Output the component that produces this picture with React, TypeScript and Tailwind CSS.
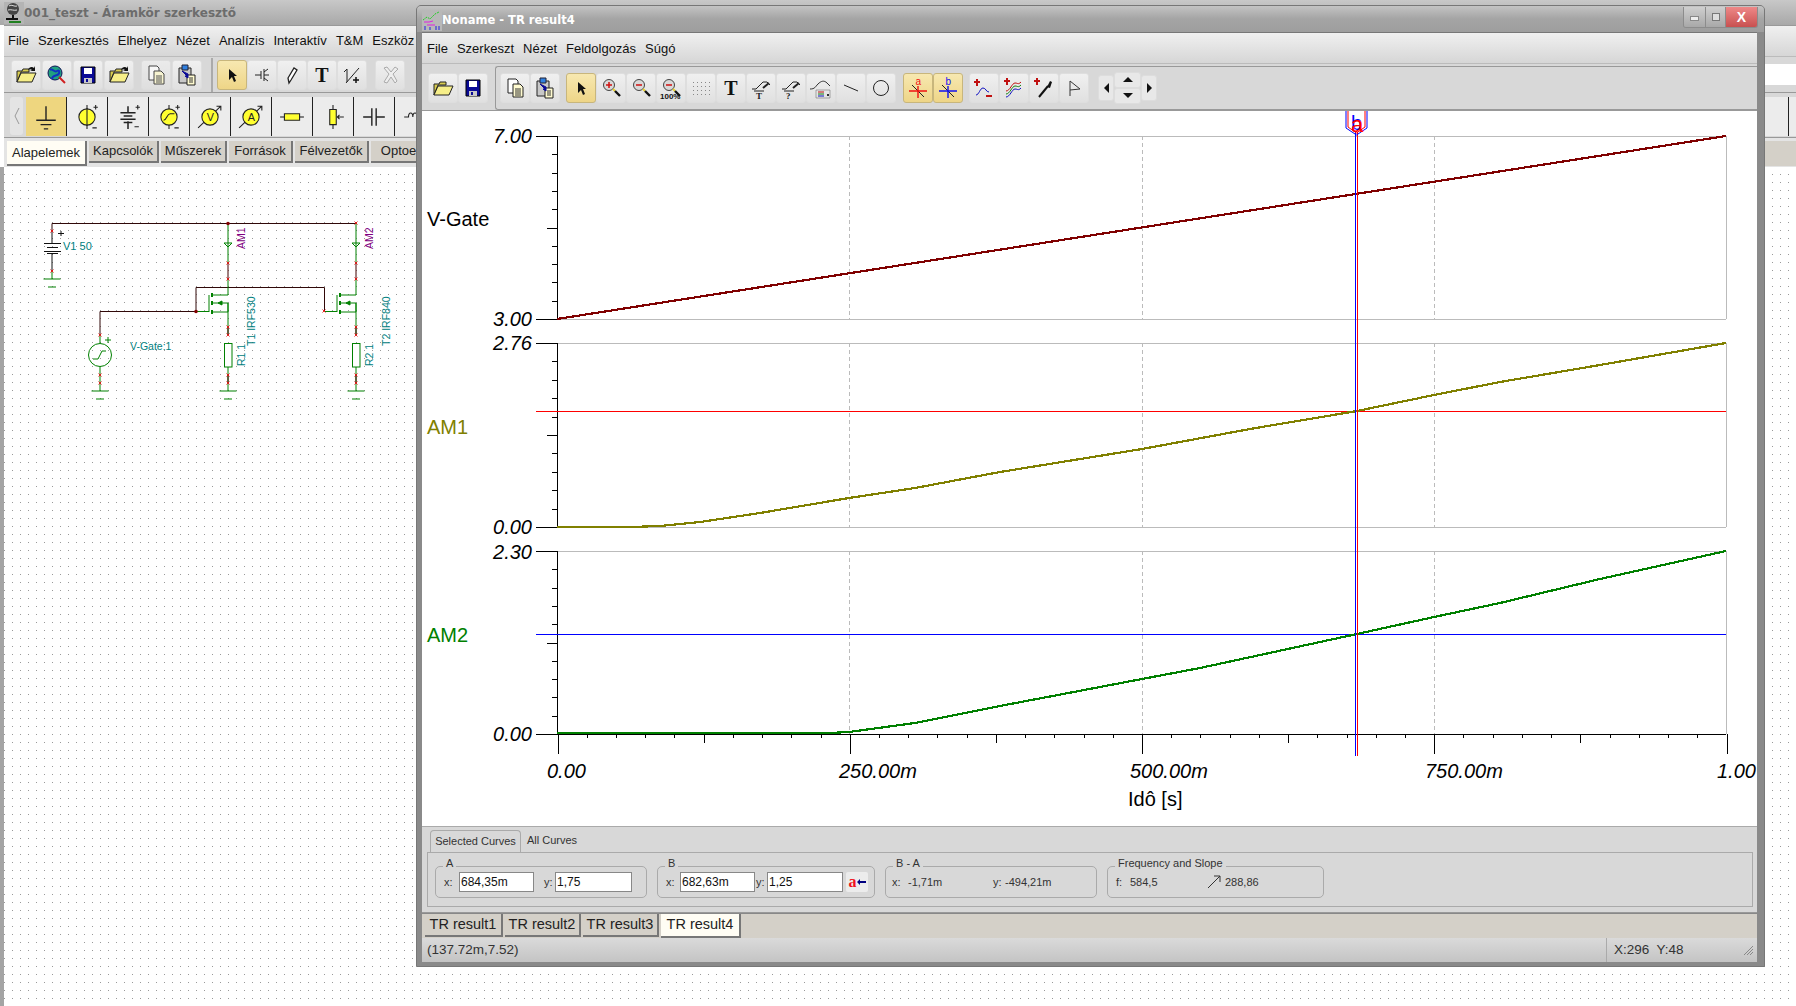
import type { ReactNode } from "react";

const SANS = "font-['Liberation_Sans',Arial,sans-serif]";

function Btn({ active, className, children }: { active?: boolean; className?: string; children?: ReactNode }) {
  return (
    <div
      className={`flex h-[30px] w-[30px] shrink-0 items-center justify-center rounded-[3px] border ${
        active
          ? "border-[#c8b67c] bg-gradient-to-b from-[#f7e8b0] to-[#eed587]"
          : "border-[#dedede] bg-gradient-to-b from-[#f0f0f0] to-[#e0e0e0]"
      } ${className ?? ""}`}
    >
      {children}
    </div>
  );
}

function Ico({ children, size = 24 }: { children: ReactNode; size?: number }) {
  return (
    <svg width={size} height={size} viewBox="0 0 24 24" fill="none">
      {children}
    </svg>
  );
}

const FolderIcon = ({ arrow }: { arrow?: boolean }) => (
  <Ico>
    <path d="M3 8h5l1-2h6v3H7l-4 10z" fill="#d8cc50" stroke="#222" />
    <path d="M3 19l4-9h15l-4 9z" fill="#f6ee88" stroke="#222" />
    {arrow && <path d="M14 7c1-3 4-4 6-2l1-2v5h-5l2-1c-1-1-3-1-4 0z" fill="#111" />}
  </Ico>
);
const FloppyIcon = () => (
  <Ico>
    <path d="M5 4h14v16H5z" fill="#0a0a96" stroke="#000" />
    <path d="M8 5h8v6H8z" fill="#fff" />
    <path d="M8 15h8v5H8z" fill="#c8c8c8" />
    <path d="M10 16h2v3h-2z" fill="#0a0a96" />
  </Ico>
);
const CopyIcon = () => (
  <Ico>
    <path d="M5 3h8l2 2v12H5z" fill="#fff" stroke="#222" />
    <path d="M10 8h7l3 3v10H10z" fill="#fffbd0" stroke="#222" />
    <path d="M12 13h6M12 15h6M12 17h6M12 19h6" stroke="#333" />
  </Ico>
);
const PasteIcon = () => (
  <Ico>
    <path d="M4 5h12v15H4z" fill="#c8c8c8" stroke="#222" />
    <path d="M7 2h6v5H7z" fill="#3080e0" stroke="#223" />
    <path d="M12 12h8v10h-8z" fill="#fffbd0" stroke="#222" />
    <path d="M14 15h4M14 17h4M14 19h4" stroke="#333" />
    <path d="M7 8l5 5-2 0 3 2 0-4z" fill="#0a0a96" stroke="#0a0a96" />
  </Ico>
);
const ArrowIcon = () => (
  <Ico>
    <path d="M9 6v11l3-3 2 5 2-1-2-5h3z" fill="#111" />
  </Ico>
);
const ZoomIcon = ({ sign, label }: { sign: "+" | "-"; label?: boolean }) => (
  <Ico>
    <circle cx="10" cy="9" r="5.5" fill="#d8d8d8" stroke="#444" />
    <path d="M7 9h6" stroke="#d01010" strokeWidth="1.5" />
    {sign === "+" && <path d="M10 6v6" stroke="#d01010" strokeWidth="1.5" />}
    <path d="M14 13l2 2" stroke="#e8d030" strokeWidth="2" />
    <path d="M16 15l5 5" stroke="#111" strokeWidth="2.4" />
    {label && (
      <text x="1" y="23" fontSize="8" fill="#111" fontFamily="Liberation Sans" fontWeight="700">
        100%
      </text>
    )}
  </Ico>
);
const GridIcon = () => (
  <Ico>
    {[6, 10, 14, 18].flatMap((y) =>
      [4, 8, 12, 16, 20].map((x) => <rect key={`${x}-${y}`} x={x} y={y} width="1" height="1" fill="#888" />)
    )}
  </Ico>
);
const SerifT = () => <span className="font-['Liberation_Serif',serif] text-[20px] font-bold leading-none text-[#111]">T</span>;
const MeasureIcon = ({ mark }: { mark: string }) => (
  <Ico>
    <path d="M3 13h4l7-7h4l3 3" stroke="#222" />
    <path d="M5 15h10" stroke="#222" />
    <path d="M14 12l6-5" stroke="#222" strokeWidth="2" />
    <text x="7" y="23" fontSize="9" fontWeight="700" fill="#222" fontFamily="Liberation Serif">
      {mark}
    </text>
  </Ico>
);
const LegendCurveIcon = () => (
  <Ico>
    <path d="M1 13c5 0 5-2 8-5s6-4 9-1l3 3" stroke="#333" />
    <path d="M7 14h14v8H7z" fill="none" stroke="#777" strokeWidth="0.6" />
    <path d="M9 16h6" stroke="#c01010" />
    <path d="M9 18h6" stroke="#108010" />
    <path d="M9 20h6" stroke="#1010c0" />
    <path d="M18 18l2 2m0-2l-2 2" stroke="#333" />
  </Ico>
);
const CursorIcon = ({ color, letter }: { color: string; letter: string }) => (
  <Ico>
    <path d="M6 9l12 12" stroke="#222" />
    <path d="M3 15h18M12 10v12" stroke={color} strokeWidth="1.4" />
    <text x="9.5" y="9" fontSize="10" fill={color} fontFamily="Liberation Sans">
      {letter}
    </text>
  </Ico>
);

function MenuBar({ items, className }: { items: string[]; className: string }) {
  return (
    <div className={`flex items-center gap-[9px] bg-gradient-to-b from-[#f0f0f0] to-[#d6d6d6] text-[13px] text-[#111] ${className}`}>
      {items.map((m) => (
        <span key={m}>{m}</span>
      ))}
    </div>
  );
}

function PaletteCell({ active, children }: { active?: boolean; children: ReactNode }) {
  return (
    <div className={`flex h-[39px] w-[41px] shrink-0 items-center justify-center border-r border-[#222] ${active ? "bg-[#eed67f]" : "bg-[#ececec]"}`}>
      {children}
    </div>
  );
}

function Tab({ active, className, children }: { active?: boolean; className: string; children: ReactNode }) {
  return (
    <div
      className={`flex shrink-0 items-center justify-center border-r-2 border-b-2 border-[#777] text-[#222] ${
        active ? "bg-[#fffdf4]" : "bg-[#d4d0c8]"
      } ${className}`}
    >
      {children}
    </div>
  );
}

const YC = "#ffff30";
const paletteIcons = [
  <Ico key="g" size={26}><path d="M12 2v13M3 15h18M7 19h10M10 23h4" stroke="#222" strokeWidth="1.3" /></Ico>,
  <Ico key="s" size={26}><path d="M12 1v22" stroke="#222" /><circle cx="12" cy="12" r="7.500" fill={YC} stroke="#222" /><path d="M12 4v16" stroke="#222" /><path d="M18 3h4m-2-2v4M17 22h4" stroke="#222" /></Ico>,
  <Ico key="b" size={26}><path d="M12 2v6M12 16v7M5 8h14M8 11h8M5 14h14M8 17h8" stroke="#222" strokeWidth="1.4" /><path d="M19 3h4M21 1v4M18 21h4" stroke="#222" /></Ico>,
  <Ico key="f" size={26}><path d="M12 1v22" stroke="#222" /><circle cx="12" cy="12" r="7.500" fill={YC} stroke="#222" /><path d="M7 15c3 0 3-6 6-6h4" stroke="#222" /><path d="M18 3h4m-2-2v4M17 22h4" stroke="#222" /></Ico>,
  <Ico key="v" size={26}><path d="M1 22L22 2M18 2h4v4" stroke="#222" /><circle cx="12" cy="12" r="7.500" fill={YC} stroke="#222" /><text x="9" y="16" fontSize="10" fill="#222" fontFamily="Liberation Sans">V</text></Ico>,
  <Ico key="a" size={26}><path d="M1 22L22 2M18 2h4v4" stroke="#222" /><circle cx="12" cy="12" r="7.500" fill={YC} stroke="#222" /><text x="9" y="16" fontSize="10" fill="#222" fontFamily="Liberation Sans">A</text></Ico>,
  <Ico key="r" size={26}><path d="M1 12h22" stroke="#222" /><path d="M5 9h14v6H5z" fill={YC} stroke="#222" /></Ico>,
  <Ico key="p" size={26}><path d="M12 1v22M22 12h-6M18 10l-2 2 2 2" stroke="#222" /><path d="M9 5h6v14H9z" fill={YC} stroke="#222" /></Ico>,
  <Ico key="c" size={26}><path d="M2 12h8M14 12h8M10 4v16M14 4v16" stroke="#222" strokeWidth="1.3" /></Ico>,
  <Ico key="l" size={26}><path d="M2 12h4c0-5 4-5 4 0 0-5 4-5 4 0 0-5 4-5 4 0h4" stroke="#222" /></Ico>,
];

/** Pin markers: little red crosses the schematic editor draws on every terminal */
function Pin({ x, y }: { x: number; y: number }) {
  return <path d={`M${x - 1.500} ${y - 1.500}l3 3m0-3l-3 3`} stroke="#e01010" strokeWidth="0.9" />;
}

function Ground({ x, y }: { x: number; y: number }) {
  return <path d={`M${x - 8.500} ${y}h17M${x - 4} ${y + 8}h8`} stroke="#008000" strokeWidth="1.100" />;
}

function Branch({ dx, am, r, t }: { dx: number; am: string; r: string; t: string }) {
  const x = 228 + dx;
  const g = 209 + dx;
  return (
    <g fill="none">
      <path d={`M${x} 223V263M${x} 279V295H${g + 3}M${g} 295V312M${g + 3} 303H${x}V335M${g + 3} 312H${x}V303M${x} 367V391M${g - 12} 311.500H${g}`} stroke="#008000" />
      <path d={`M${x} 263V279M${x} 327V335M${x} 375V383`} stroke="#400000" />
      <path d={`M${x - 4} 243h8l-4 4z`} stroke="#008000" />
      <path d={`M${g + 3} 293v4M${g + 3} 301v4M${g + 3} 310v4`} stroke="#008000" strokeWidth="2" />
      <path d={`M${g + 9} 303l4-2v4z`} fill="#008000" stroke="#008000" />
      <rect x={x - 3.500} y="343.500" width="7.500" height="23.500" fill="#fff" stroke="#008000" />
      <Ground x={x} y={391} />
      {[263, 279, 327, 335, 375, 383].map((y) => (
        <Pin key={y} x={x} y={y} />
      ))}
      <text transform={`translate(${x + 17} 249) rotate(-90)`} fontSize="10.500" fill="#800080">{am}</text>
      <text transform={`translate(${x + 17} 366) rotate(-90)`} fontSize="10.500" fill="#008080">{r}</text>
      <text transform={`translate(${x + 27 + (dx ? 7 : 0)} 346) rotate(-90)`} fontSize="10.500" fill="#008080">{t}</text>
    </g>
  );
}

function Circuit() {
  return (
    <svg width="420" height="300" viewBox="4 167 420 300" className="block" fontFamily="Liberation Sans">
      <path d="M52 231V223.500H356M196 311.500V287.500H324.500V311M100 335V311.500H196" stroke="#300808" fill="none" />
      <path d="M52 231V243M44 243.500h17M47 247.500h11M44 251.500h17M47 253.500h11M52 254v17" stroke="#111" fill="none" />
      <path d="M52 271V279" stroke="#008000" />
      <Ground x={52} y={279} />
      <Pin x={52} y={231} />
      <Pin x={52} y={271} />
      <path d="M58 233.500h6M61 231v5" stroke="#111" />
      <text x="63" y="250" fontSize="11" fill="#008080">V1 50</text>

      <Branch dx={0} am="AM1" r="R1 1" t="T1 IRF530" />
      <Branch dx={128} am="AM2" r="R2 1" t="T2 IRF840" />
      <circle cx="228" cy="223.500" r="1.800" fill="#800000" />
      <circle cx="196" cy="311.500" r="1.800" fill="#800000" />
      <Pin x={356} y={223} />
      <Pin x={324} y={311} />

      <path d="M100 335V343M100 367V391" stroke="#008000" />
      <circle cx="100" cy="355" r="11.500" fill="none" stroke="#008000" />
      <path d="M93 359h5l4-8h4" stroke="#008000" fill="none" />
      <path d="M105 340h6M108 337v6" stroke="#008000" />
      <Ground x={100} y={391} />
      {[335, 375, 383].map((y) => (
        <Pin key={y} x={100} y={y} />
      ))}
      <text x="130" y="350" fontSize="10.500" fill="#008080">V-Gate:1</text>
    </svg>
  );
}

function toPoints(pts: number[][]) {
  return pts.map((p) => p.join(",")).join(" ");
}

const plots = [
  { top: 136, bottom: 319 },
  { top: 343, bottom: 527 },
  { top: 551, bottom: 734 },
];
const yLabels = [
  { t: "7.00", y: 143 },
  { t: "3.00", y: 326 },
  { t: "2.76", y: 350 },
  { t: "0.00", y: 534 },
  { t: "2.30", y: 559 },
  { t: "0.00", y: 741 },
];
const xLabels = [
  { t: "0.00", x: 547 },
  { t: "250.00m", x: 839 },
  { t: "500.00m", x: 1130 },
  { t: "750.00m", x: 1425 },
  { t: "1.00", x: 1717 },
];
const am1 = [[557, 527], [630, 527], [660, 526], [700, 522], [760, 513], [849, 498], [915, 488], [1000, 472], [1142, 449], [1250, 429], [1357, 411], [1434, 395], [1500, 382], [1600, 365], [1726, 343]];
const am2 = [[557, 733], [830, 733], [849, 732], [915, 723], [1000, 706], [1142, 679], [1200, 668], [1357, 634], [1434, 617], [1500, 603], [1600, 579], [1726, 551]];

function Chart() {
  return (
    <svg width="1335" height="715" viewBox="422 111 1335 715" className="block bg-white" fontFamily="Liberation Sans">
      {plots.map((p) => (
        <g key={p.top} shapeRendering="crispEdges">
          <path d={`M557 ${p.top + 0.5}H1726M557 ${p.bottom + 0.5}H1726M1726.500 ${p.top}V${p.bottom}`} stroke="#bbb" />
          {[849, 1142, 1434].map((x) => (
            <path key={x} d={`M${x + 0.5} ${p.top}V${p.bottom}`} stroke="#bbb" strokeDasharray="4 3" />
          ))}
          <path d={`M557.500 ${p.top}V${p.bottom + 1}`} stroke="#000" />
          {Array.from({ length: 11 }, (_, i) => {
            const y = Math.round(p.top + ((p.bottom - p.top) * i) / 10) + 0.5;
            const len = i === 0 || i === 10 ? 21 : i === 5 ? 10 : 5;
            return <path key={i} d={`M${557 - len} ${y}H557`} stroke="#000" />;
          })}
        </g>
      ))}
      <g shapeRendering="crispEdges">
        <path d="M557 734.500H1726" stroke="#000" />
        {Array.from({ length: 41 }, (_, i) => {
          const x = Math.round(557.5 + (1169 * i) / 40) + 0.5;
          const len = i % 10 === 0 ? 20 : i % 5 === 0 ? 9 : 4;
          return <path key={i} d={`M${x} 734V${734 + len}`} stroke="#000" />;
        })}
        <path d="M536 411.500H1726" stroke="#ff0000" />
        <path d="M536 634.500H1726" stroke="#0000ff" />
      </g>
      <g fill="none" strokeWidth="2.200" shapeRendering="crispEdges">
        <polyline points="557,319 1726,136" stroke="#800000" />
        <polyline points={toPoints(am1)} stroke="#808000" />
        <polyline points={toPoints(am2)} stroke="#008000" />
      </g>
      <g shapeRendering="crispEdges">
        <path d="M1355.500 132V756" stroke="#0000ff" />
        <path d="M1357.500 132V756" stroke="#ff0000" />
      </g>
      <path d="M1346 111v17l10.500 7 10.500-7V111" stroke="#0000ff" fill="none" />
      <path d="M1348 111v16l8.500 6 8.500-6V111" stroke="#ff0000" fill="none" />
      <text x="1351" y="130" fontSize="20" fill="#0000ff">b</text>
      <text x="1351" y="132" fontSize="22" fill="#ff0000">a</text>

      <g fontSize="20" fontStyle="italic" fill="#000">
        {yLabels.map((l) => (
          <text key={l.y} x="532" y={l.y} textAnchor="end">{l.t}</text>
        ))}
        {xLabels.map((l) => (
          <text key={l.x} x={l.x} y="778">{l.t}</text>
        ))}
      </g>
      <g fontSize="20">
        <text x="427" y="226" fill="#000">V-Gate</text>
        <text x="427" y="434" fill="#808000">AM1</text>
        <text x="427" y="642" fill="#008000">AM2</text>
        <text x="1128" y="806" fill="#000">Idô [s]</text>
      </g>
    </svg>
  );
}

function GroupBox({ title, className, children }: { title: string; className: string; children: ReactNode }) {
  return (
    <fieldset className={`h-[38px] shrink-0 rounded-[5px] border border-[#aaa] ${className}`}>
      <legend className="ml-[7px] -translate-y-[3px] px-[3px] text-[11px] leading-[12px] text-[#333]">{title}</legend>
      <div className="flex h-[20px] items-center text-[11px] text-[#333]">{children}</div>
    </fieldset>
  );
}

function Field({ value, className }: { value: string; className: string }) {
  return (
    <input
      readOnly
      value={value}
      className={`h-[20px] border border-[#888] bg-white px-[1px] text-[12px] text-[#111] ${className}`}
    />
  );
}

function ResultWindow() {
  return (
    <div className={`absolute top-[5px] left-[416px] flex h-[962px] w-[1349px] flex-col rounded-t-[5px] border border-[#777] bg-[#8a8a8a] pr-[7px] pb-[4px] pl-[5px] ${SANS}`}>
      {/* title bar */}
      <div className="-mx-[5px] -mr-[7px] flex h-[26px] shrink-0 items-center rounded-t-[4px] bg-gradient-to-b from-[#c4c4c4] via-[#a4a4a4] to-[#9e9e9e] pl-[5px]">
        <svg width="20" height="20" viewBox="0 0 20 20" className="mt-[4px] shrink-0 bg-[#b8b8b8]" fill="none">
          <path d="M1 9l4-3 3 2 5-5 4-2" stroke="#20d020" strokeDasharray="2 1" />
          <path d="M2 11h5l4-1" stroke="#e020e0" />
          <path d="M3 15v4M8 16v3M14 15v4M17 15v4" stroke="#2020e0" />
          <path d="M5 14h8" stroke="#e020e0" />
        </svg>
        <span className="pt-[3px] font-['DejaVu_Sans',sans-serif] text-[11.500px] leading-none font-bold text-white">Noname - TR result4</span>
        <div className="mt-[1px] mr-[6px] ml-auto flex h-[21px] self-start overflow-hidden rounded-b-[3px] border border-t-0 border-[#8c8c8c]">
          <div className="flex w-[22px] items-center justify-center border-r border-[#8c8c8c] bg-gradient-to-b from-[#cfcfcf] to-[#a8a8a8]">
            <div className="mt-[2px] h-[5px] w-[9px] border border-[#888] bg-[#eee]" />
          </div>
          <div className="flex w-[20px] items-center justify-center border-r border-[#8c8c8c] bg-gradient-to-b from-[#cfcfcf] to-[#a8a8a8]">
            <div className="h-[8px] w-[8px] border border-[#777] bg-[#ddd]" />
          </div>
          <div className="flex w-[31px] items-center justify-center bg-gradient-to-b from-[#e88] to-[#c85050] text-[14px] font-bold text-white">X</div>
        </div>
      </div>

      <div className="flex min-h-0 flex-1 flex-col border-t border-[#777] bg-[#d8d8d8]">
        <MenuBar items={["File", "Szerkeszt", "Nézet", "Feldolgozás", "Súgó"]} className="h-[30px] shrink-0 pt-[2px] pl-[5px]" />
        {/* toolbar */}
        <div className="flex h-[48px] shrink-0 items-center border-y border-t-[#bbb] border-b-[#999] bg-[#d8d8d8] pt-[1px] pl-[6px]">
          <Btn><FolderIcon /></Btn>
          <Btn><FloppyIcon /></Btn>
          <div className="ml-[7px] flex h-[44px] flex-1 items-center rounded-l-[3px] border border-r-0 border-[#999] pl-[4px]">
            <Btn><CopyIcon /></Btn>
            <Btn><PasteIcon /></Btn>
            <Btn active className="ml-[6px]"><ArrowIcon /></Btn>
            <Btn><ZoomIcon sign="+" /></Btn>
            <Btn><ZoomIcon sign="-" /></Btn>
            <Btn><ZoomIcon sign="-" label /></Btn>
            <Btn><GridIcon /></Btn>
            <Btn><SerifT /></Btn>
            <Btn><MeasureIcon mark="T" /></Btn>
            <Btn><MeasureIcon mark="?" /></Btn>
            <Btn><LegendCurveIcon /></Btn>
            <Btn><Ico><path d="M5 9l14 6" stroke="#222" /></Ico></Btn>
            <Btn><Ico><circle cx="12" cy="12" r="7.500" stroke="#222" /></Ico></Btn>
            <Btn active className="ml-[7px]"><CursorIcon color="#f01010" letter="a" /></Btn>
            <Btn active><CursorIcon color="#1010f0" letter="b" /></Btn>
            <Btn className="ml-[6px]">
              <Ico>
                <path d="M5 3v7M2 6h6" stroke="#c01010" strokeWidth="2" />
                <path d="M4 19c3 0 4-7 7-7s3 4 6 4" stroke="#1010c0" />
                <path d="M14 20h6" stroke="#c01010" strokeWidth="2" />
              </Ico>
            </Btn>
            <Btn>
              <Ico>
                <path d="M5 2v7M2 5h6" stroke="#c01010" strokeWidth="2" />
                <path d="M4 15c4 0 6-8 9-8s3 2 6-1" stroke="#c01010" />
                <path d="M4 18c4 0 6-8 9-8s3 2 6-1" stroke="#108010" />
                <path d="M4 21c4 0 6-8 9-8s3 2 6-1" stroke="#1010c0" />
              </Ico>
            </Btn>
            <Btn>
              <Ico>
                <path d="M5 2v7M2 5h6" stroke="#c01010" strokeWidth="2" />
                <path d="M7 21l9-11" stroke="#111" strokeWidth="2" />
                <path d="M15 11l3-6 2 1-2 6z" fill="#111" />
              </Ico>
            </Btn>
            <Btn><Ico><path d="M8 5v15M8 5l10 8-10 1" stroke="#333" /></Ico></Btn>
            <div className="ml-[9px] flex h-[26px] w-[16px] items-center justify-center rounded-[3px] border border-[#ddd] bg-[#e8e8e8]">
              <div className="h-0 w-0 border-y-[5px] border-r-[5px] border-y-transparent border-r-[#111]" />
            </div>
            <div className="flex flex-col">
              <div className="flex h-[16px] w-[27px] items-center justify-center rounded-[3px] border border-[#ddd] bg-[#e8e8e8]">
                <div className="h-0 w-0 border-x-[5px] border-b-[5px] border-x-transparent border-b-[#111]" />
              </div>
              <div className="flex h-[16px] w-[27px] items-center justify-center rounded-[3px] border border-[#ddd] bg-[#e8e8e8]">
                <div className="h-0 w-0 border-x-[5px] border-t-[5px] border-x-transparent border-t-[#111]" />
              </div>
            </div>
            <div className="flex h-[26px] w-[16px] items-center justify-center rounded-[3px] border border-[#ddd] bg-[#e8e8e8]">
              <div className="h-0 w-0 border-y-[5px] border-l-[5px] border-y-transparent border-l-[#111]" />
            </div>
          </div>
        </div>

        <Chart />

        {/* cursor readout panel */}
        <div className="flex h-[87px] shrink-0 flex-col border-y border-t-[#aaa] border-b-[#999] bg-[#d8d8d8] pt-[3px] pr-[4px] pl-[5px]">
          <div className="flex h-[22px] shrink-0 items-end pl-[3px] text-[11px] text-[#333]">
            <div className="-mb-[1px] flex h-[23px] w-[91px] items-center justify-center rounded-t-[4px] border border-b-0 border-[#aaa] bg-[#d8d8d8] pb-[2px]">Selected Curves</div>
            <div className="ml-[6px] pb-[4px]">All Curves</div>
          </div>
          <div className="flex h-[55px] items-start gap-[10px] border border-[#aaa] pt-[7px] pl-[7px]">
            <GroupBox title="A" className="w-[212px]">
              <span className="ml-[8px] w-[15px]">x:</span>
              <Field value="684,35m" className="w-[75px]" />
              <span className="ml-[10px] w-[11px]">y:</span>
              <Field value="1,75" className="w-[77px]" />
            </GroupBox>
            <GroupBox title="B" className="w-[218px]">
              <span className="ml-[8px] w-[14px]">x:</span>
              <Field value="682,63m" className="w-[75px]" />
              <span className="ml-[1px] w-[11px]">y:</span>
              <Field value="1,25" className="w-[76px]" />
              <div className="ml-[3px] flex h-[20px] w-[22px] items-center justify-center rounded-[2px] bg-[#ececec]">
                <span className="font-['Liberation_Serif',serif] text-[16px] leading-none font-bold text-[#f01020]">a</span>
                <svg width="9" height="6" viewBox="0 0 9 6"><path d="M0 3l3-3v2h6v2H3v2z" fill="#000080" /></svg>
              </div>
            </GroupBox>
            <GroupBox title="B - A" className="w-[212px]">
              <span className="ml-[6px] w-[16px]">x:</span>
              <span className="w-[85px]">-1,71m</span>
              <span className="w-[12px]">y:</span>
              <span>-494,21m</span>
            </GroupBox>
            <GroupBox title="Frequency and Slope" className="w-[217px]">
              <span className="ml-[8px] w-[14px]">f:</span>
              <span className="w-[77px]">584,5</span>
              <svg width="14" height="14" viewBox="0 0 14 14" fill="none" className="mr-[4px]"><path d="M1 13L13 1M7 1h6v6" stroke="#333" /></svg>
              <span>288,86</span>
            </GroupBox>
          </div>
        </div>

        {/* result tabs */}
        <div className="flex h-[25px] shrink-0 items-start gap-[2px] border-t border-[#888] bg-[#d4d0c8] pl-[3px] text-[14.500px]">
          <Tab className="h-[23px] w-[78px]">TR result1</Tab>
          <Tab className="h-[23px] w-[76px]">TR result2</Tab>
          <Tab className="h-[23px] w-[76px]">TR result3</Tab>
          <Tab active className="h-[24px] w-[80px]">TR result4</Tab>
        </div>

        {/* status bar */}
        <div className="flex min-h-0 flex-1 items-center bg-gradient-to-b from-[#dadada] to-[#c4c4c4] pl-[5px] text-[13.500px] text-[#333]">
          <span>(137.72m,7.52)</span>
          <div className="ml-auto flex h-full w-[151px] items-center border-l border-[#aaa] pl-[7px]">
            <span>X:296&nbsp; Y:48</span>
            <svg width="11" height="11" viewBox="0 0 11 11" className="mr-[3px] ml-auto" fill="none">
              <path d="M1 10l9-9M4 10l6-6M7 10l3-3" stroke="#888" />
            </svg>
          </div>
        </div>
      </div>
    </div>
  );
}

export default function App() {
  return (
    <div className={`relative flex h-[1006px] w-[1796px] flex-col overflow-hidden bg-white ${SANS}`}>
      {/* editor window behind the results window */}
      <div className="flex h-[25px] shrink-0 items-center bg-gradient-to-b from-[#c8c8c8] to-[#a8a8a8] pl-[4px]">
        <svg width="20" height="22" viewBox="0 0 20 22" fill="none" className="shrink-0 bg-[#b4b4b4]">
          <circle cx="9" cy="7" r="6" fill="#444" />
          <path d="M5 4c3-2 5 1 8 0M4 8c3-1 6 1 9 0" stroke="#ddd" />
          <path d="M9 13v3M2 17h12" stroke="#111" strokeWidth="2" />
          <path d="M5 20h12" stroke="#208020" strokeWidth="2" />
        </svg>
        <span className="font-['DejaVu_Sans',sans-serif] text-[12px] font-bold text-[#6c6c6c]">001_teszt - Áramkör szerkesztő</span>
      </div>
      <div className="flex shrink-0 flex-col pl-[4px]">
        <MenuBar items={["File", "Szerkesztés", "Elhelyez", "Nézet", "Analízis", "Interaktív", "T&M", "Eszköz"]} className="h-[31px] border-t border-[#999] pl-[4px]" />
        <div className="relative flex h-[37px] items-center border-y border-t-[#bbb] border-b-[#999] bg-[#d8d8d8] pl-[7px]">
          <div className="flex gap-[1px]">
            <Btn><FolderIcon arrow /></Btn>
            <Btn>
              <Ico>
                <circle cx="10" cy="10" r="7" fill="#20a080" stroke="#115" />
                <path d="M5 7c3-2 4 3 7 1s3 3 0 4-5 1-5 4" stroke="#1030c0" strokeWidth="2" />
                <path d="M14 14l6 6" stroke="#d02020" strokeWidth="2" />
              </Ico>
            </Btn>
            <Btn><FloppyIcon /></Btn>
            <Btn><FolderIcon arrow /></Btn>
            <Btn className="ml-[6px] opacity-80"><CopyIcon /></Btn>
            <Btn><PasteIcon /></Btn>
          </div>
          <div className="mr-[4px] ml-[9px] h-[34px] w-[2px] bg-[#aaa]" />
          <div className="flex">
            <Btn active><ArrowIcon /></Btn>
            <Btn>
              <Ico><path d="M5 12h6M11 8v8M14 6v12M14 12h5M14 9l4-3M14 15l4 3" stroke="#222" /></Ico>
            </Btn>
            <Btn>
              <Ico><path d="M9 20l-1-5 6-10 3 2-6 10z" fill="#fff" stroke="#222" strokeWidth="1.300" /></Ico>
            </Btn>
            <Btn><SerifT /></Btn>
            <Btn>
              <Ico>
                <path d="M7 6v13M4 9l3-3M6 20L19 5" stroke="#222" />
                <path d="M16 14v6M13 17h6" stroke="#111" strokeWidth="1.500" />
              </Ico>
            </Btn>
            <Btn className="ml-[8px]">
              <Ico><path d="M6 5l5 6-5 8 3 1 4-6 4 6 2-2-4-7 5-5-3-2-4 5-4-5z" fill="#eee" stroke="#aaa" /></Ico>
            </Btn>
          </div>
          <div className="ml-auto h-[21px] w-[40px] bg-white" />
        </div>
        <div className="flex h-[45px] items-start border-b border-[#999] bg-[#d8d8d8] pt-[4px] pl-[6px]">
          <div className="mr-[3px] flex h-[38px] w-[13px] shrink-0 items-center justify-center rounded-[3px] bg-[#e4e4e4]">
            <svg width="6" height="18" viewBox="0 0 6 18" fill="none"><path d="M5 1L1 9l4 8" stroke="#999" /></svg>
          </div>
          {paletteIcons.map((icon, i) => (
            <PaletteCell key={i} active={i === 0}>{icon}</PaletteCell>
          ))}
          <div className="h-[39px] flex-1 bg-[#ececec]">
            <div className="h-full w-[1353px] border-r border-[#222]" />
          </div>
        </div>
        <div className="flex h-[29px] items-start gap-[2px] bg-[#e4e4e4] pt-[3px] pl-[3px] text-[13px]">
          <Tab active className="h-[25px] w-[80px]">Alapelemek</Tab>
          <Tab className="h-[22px] w-[70px]">Kapcsolók</Tab>
          <Tab className="h-[22px] w-[66px]">Műszerek</Tab>
          <Tab className="h-[22px] w-[64px]">Források</Tab>
          <Tab className="h-[22px] w-[74px]">Félvezetők</Tab>
          <Tab className="h-[22px] w-[60px]">Optoel</Tab>
          <div className="h-[25px] flex-1 bg-[#d4d0c8]" />
        </div>
      </div>
      <div className="flex min-h-0 flex-1 border-l-[4px] border-[#a4a4a4] bg-white bg-[radial-gradient(circle_at_0.500px_0.500px,#999_0.500px,transparent_0.800px)] bg-[size:8px_8px] bg-[position:0px_7px]">
        <div>
          <Circuit />
        </div>
      </div>

      <ResultWindow />
    </div>
  );
}
